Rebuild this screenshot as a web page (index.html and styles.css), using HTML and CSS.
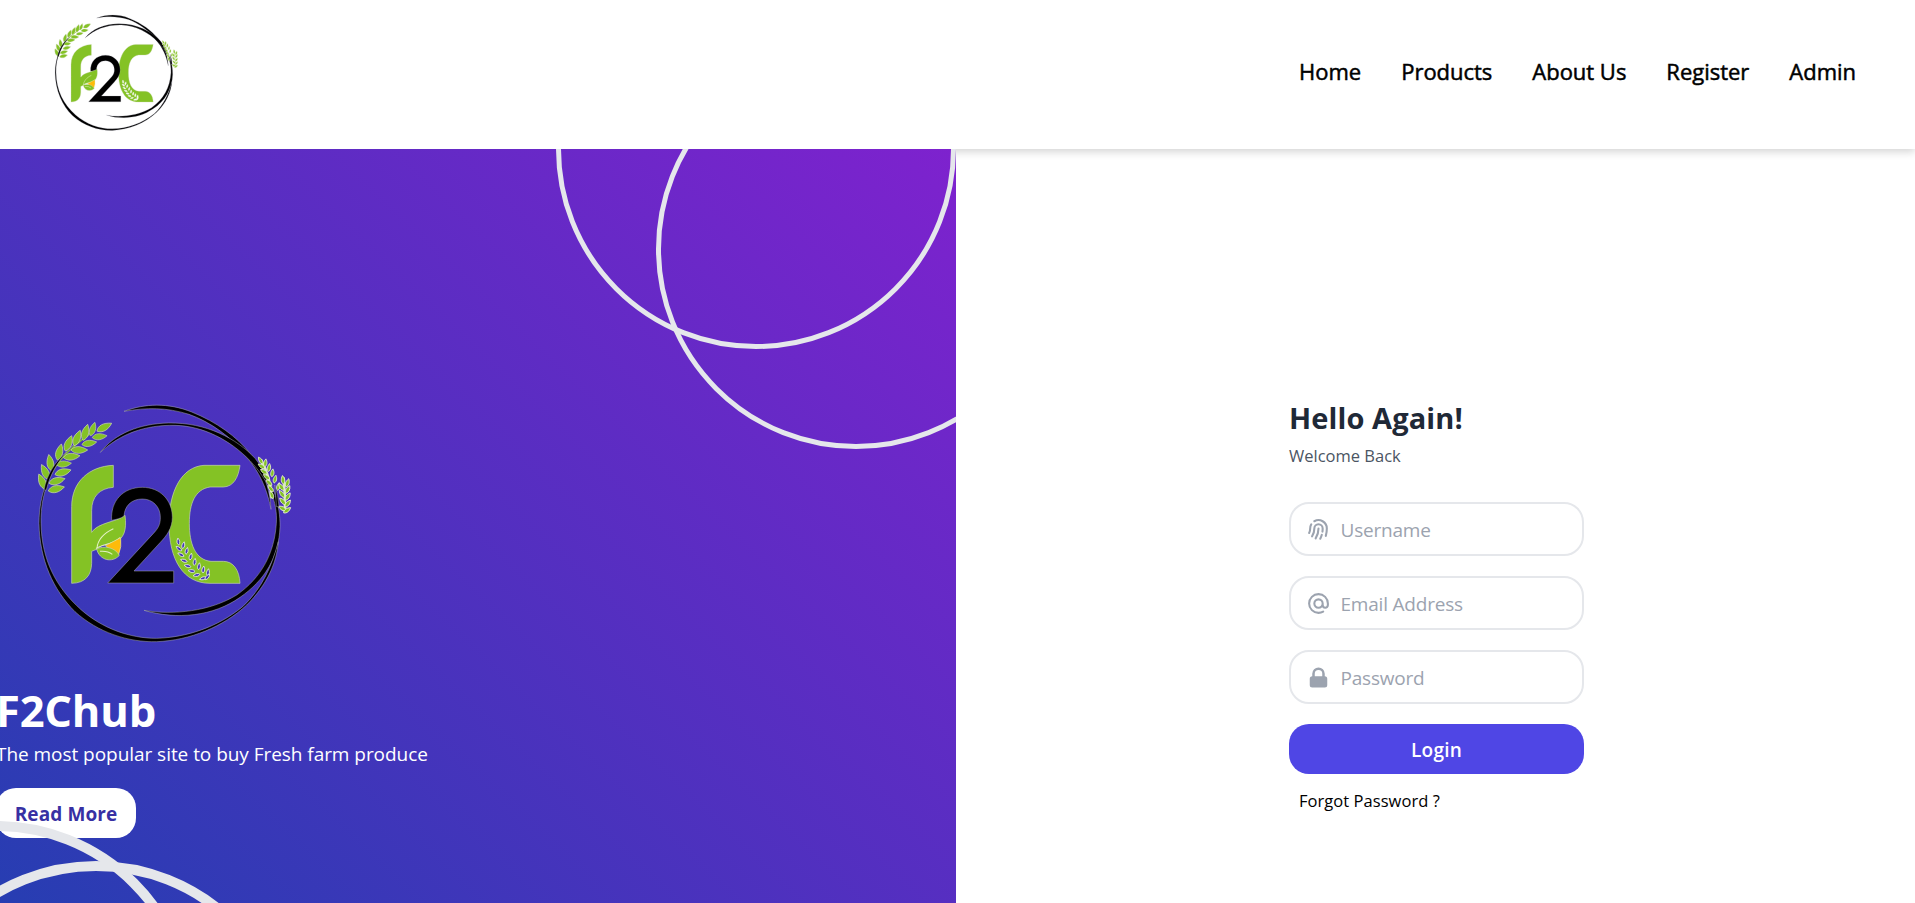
FILE: index.html
```html
<!DOCTYPE html>
<html lang="en">
<head>
<meta charset="utf-8">
<title>F2Chub</title>
<link rel="stylesheet" href="styles.css">
</head>
<body>
<svg class="defs" width="0" height="0" aria-hidden="true">
  <symbol id="leaf" viewBox="-26 -14 52 28" overflow="visible"><path d="M-24 1C-14-13 4-14 26-1C8 13-12 14-24 1Z"/></symbol>
  <symbol id="logo" viewBox="57 45 755 710" overflow="visible">
    <g class="ink">
      <path d="M312 64C375 40 445 38 515 66C590 96 650 140 690 190C730 240 750 295 753 358C741 295 718 245 677 198C638 143 570 95 507 73C440 52 380 52 312 64Z"/>
      <path d="M241 187C285 130 360 101 445 99C560 97 650 146 705 205C760 275 781 345 780 410C777 500 735 570 660 622C580 679 470 690 372 661C460 676 570 664 650 615C725 562 763 490 769 400C773 335 748 275 690 212C630 150 550 108 465 106C375 104 300 132 241 187Z"/>
      <path d="M160 165C90 225 57 310 57 400C59 510 100 600 165 665C235 728 325 757 410 755C510 751 610 710 680 645C740 585 770 520 775 455C755 530 725 597 668 650C592 712 500 742 410 745C330 745 248 716 183 659C108 592 65 510 63 400C61 305 95 230 160 165Z"/>
    </g>
    <g class="green">
      <path d="M280 226V292C238 295 215 320 215 362V427C235 397 285 398 315 376C321 420 312 446 284 457C262 464 245 462 234 476L215 484V520C214 556 196 579 155 580V350C155 275 208 229 280 226Z"/>
      <path d="M660 226H552C485 230 447 304 447 400C447 510 490 580 570 580H660C658 540 640 514 610 514H573C525 510 508 460 508 400C508 340 525 298 570 291H610C641 290 655 262 660 226Z"/>
    </g>
    <path class="ink" d="M275 391C271 332 310 292 367 292C420 292 457 330 457 382C457 415 440 437 420 458L342 543H461V579H263L405 425C418 410 421 398 421 382C421 350 398 327 367 327C335 327 314 347 312 378C302 386 288 388 275 391Z"/>
    <path class="vein" d="M231 474C233 452 250 430 280 416"/>
    <path class="vein" d="M228 476C245 460 275 468 300 443"/>
    <path class="seed" d="M302 443L256 467L295 496Q306 470 302 443Z"/>
    <path class="green" d="M230 477C250 466 285 471 298 496C277 520 238 511 230 477Z"/>
    <path class="vein" d="M240 484Q263 482 277 493"/>
    <path class="stem" d="M74 300C88 240 130 185 220 125"/>
    <g class="green">
      <use href="#leaf" transform="translate(252 112) rotate(-26)" x="-26" y="-14" width="52" height="28"/>
      <use href="#leaf" transform="translate(218 118) rotate(-70) scale(.85)" x="-26" y="-14" width="52" height="28"/>
      <use href="#leaf" transform="translate(196 128) rotate(-72)" x="-26" y="-14" width="52" height="28"/>
      <use href="#leaf" transform="translate(171 145) rotate(-66)" x="-26" y="-14" width="52" height="28"/>
      <use href="#leaf" transform="translate(145 161) rotate(-65)" x="-26" y="-14" width="52" height="28"/>
      <use href="#leaf" transform="translate(118 187) rotate(-74)" x="-26" y="-14" width="52" height="28"/>
      <use href="#leaf" transform="translate(91 219) rotate(-98)" x="-26" y="-14" width="52" height="28"/>
      <use href="#leaf" transform="translate(76 247) rotate(-114)" x="-26" y="-14" width="52" height="28"/>
      <use href="#leaf" transform="translate(67 276) rotate(-112)" x="-26" y="-14" width="52" height="28"/>
      <use href="#leaf" transform="translate(238 140) rotate(-5) scale(.9)" x="-26" y="-14" width="52" height="28"/>
      <use href="#leaf" transform="translate(207 160) rotate(-8) scale(.9)" x="-26" y="-14" width="52" height="28"/>
      <use href="#leaf" transform="translate(177 180) rotate(2)" x="-26" y="-14" width="52" height="28"/>
      <use href="#leaf" transform="translate(154 200) rotate(-4)" x="-26" y="-14" width="52" height="28"/>
      <use href="#leaf" transform="translate(131 222) rotate(-4) scale(.9)" x="-26" y="-14" width="52" height="28"/>
      <use href="#leaf" transform="translate(128 247) rotate(-14)" x="-26" y="-14" width="52" height="28"/>
      <use href="#leaf" transform="translate(110 273) rotate(-14)" x="-26" y="-14" width="52" height="28"/>
      <use href="#leaf" transform="translate(108 297) rotate(-12)" x="-26" y="-14" width="52" height="28"/>
    </g>
    <path class="ink" d="M72 300C80 255 105 215 140 186C110 220 90 255 79 300Z"/>
    <path class="grain-stem" d="M722 208Q752 260 755 325M790 262Q796 310 795 368"/>
    <g class="green grain">
      <use href="#leaf" transform="translate(722 212) rotate(-120) scale(.48)" x="-26" y="-14" width="52" height="28"/>
      <use href="#leaf" transform="translate(736 219) rotate(-80) scale(.48)" x="-26" y="-14" width="52" height="28"/>
      <use href="#leaf" transform="translate(725 229) rotate(-145) scale(.48)" x="-26" y="-14" width="52" height="28"/>
      <use href="#leaf" transform="translate(747 233) rotate(-80) scale(.48)" x="-26" y="-14" width="52" height="28"/>
      <use href="#leaf" transform="translate(732 245) rotate(-145) scale(.48)" x="-26" y="-14" width="52" height="28"/>
      <use href="#leaf" transform="translate(757 249) rotate(-80) scale(.48)" x="-26" y="-14" width="52" height="28"/>
      <use href="#leaf" transform="translate(740 261) rotate(-140) scale(.48)" x="-26" y="-14" width="52" height="28"/>
      <use href="#leaf" transform="translate(765 268) rotate(-75) scale(.48)" x="-26" y="-14" width="52" height="28"/>
      <use href="#leaf" transform="translate(747 278) rotate(-135) scale(.48)" x="-26" y="-14" width="52" height="28"/>
      <use href="#leaf" transform="translate(775 290) rotate(-75) scale(.48)" x="-26" y="-14" width="52" height="28"/>
      <use href="#leaf" transform="translate(752 296) rotate(-130) scale(.48)" x="-26" y="-14" width="52" height="28"/>
      <use href="#leaf" transform="translate(755 315) rotate(-110) scale(.48)" x="-26" y="-14" width="52" height="28"/>
      <use href="#leaf" transform="translate(789 270) rotate(-95) scale(.52)" x="-26" y="-14" width="52" height="28"/>
      <use href="#leaf" transform="translate(802 279) rotate(-70) scale(.52)" x="-26" y="-14" width="52" height="28"/>
      <use href="#leaf" transform="translate(784 291) rotate(-125) scale(.52)" x="-26" y="-14" width="52" height="28"/>
      <use href="#leaf" transform="translate(803 299) rotate(-60) scale(.52)" x="-26" y="-14" width="52" height="28"/>
      <use href="#leaf" transform="translate(786 312) rotate(-125) scale(.52)" x="-26" y="-14" width="52" height="28"/>
      <use href="#leaf" transform="translate(803 320) rotate(-55) scale(.52)" x="-26" y="-14" width="52" height="28"/>
      <use href="#leaf" transform="translate(788 334) rotate(-130) scale(.52)" x="-26" y="-14" width="52" height="28"/>
      <use href="#leaf" transform="translate(803 341) rotate(-50) scale(.52)" x="-26" y="-14" width="52" height="28"/>
      <use href="#leaf" transform="translate(787 355) rotate(-150) scale(.52)" x="-26" y="-14" width="52" height="28"/>
      <use href="#leaf" transform="translate(801 361) rotate(-35) scale(.52)" x="-26" y="-14" width="52" height="28"/>
    </g>
    <path class="ink" d="M764 285Q775 315 777 350L769 350Q768 315 764 285Z"/>
    <g class="hole">
      <use href="#leaf" transform="translate(475 455) rotate(-95) scale(.42)" x="-26" y="-14" width="52" height="28"/>
      <use href="#leaf" transform="translate(490 466) rotate(-75) scale(.42)" x="-26" y="-14" width="52" height="28"/>
      <use href="#leaf" transform="translate(477 476) rotate(-140) scale(.42)" x="-26" y="-14" width="52" height="28"/>
      <use href="#leaf" transform="translate(500 483) rotate(-75) scale(.42)" x="-26" y="-14" width="52" height="28"/>
      <use href="#leaf" transform="translate(483 494) rotate(-150) scale(.42)" x="-26" y="-14" width="52" height="28"/>
      <use href="#leaf" transform="translate(512 500) rotate(-75) scale(.42)" x="-26" y="-14" width="52" height="28"/>
      <use href="#leaf" transform="translate(492 512) rotate(-160) scale(.42)" x="-26" y="-14" width="52" height="28"/>
      <use href="#leaf" transform="translate(524 516) rotate(-80) scale(.42)" x="-26" y="-14" width="52" height="28"/>
      <use href="#leaf" transform="translate(503 528) rotate(-165) scale(.42)" x="-26" y="-14" width="52" height="28"/>
      <use href="#leaf" transform="translate(537 529) rotate(-80) scale(.42)" x="-26" y="-14" width="52" height="28"/>
      <use href="#leaf" transform="translate(515 543) rotate(-170) scale(.42)" x="-26" y="-14" width="52" height="28"/>
      <use href="#leaf" transform="translate(550 539) rotate(-80) scale(.42)" x="-26" y="-14" width="52" height="28"/>
      <use href="#leaf" transform="translate(530 555) rotate(170) scale(.42)" x="-26" y="-14" width="52" height="28"/>
      <use href="#leaf" transform="translate(564 547) rotate(-80) scale(.42)" x="-26" y="-14" width="52" height="28"/>
      <use href="#leaf" transform="translate(549 565) rotate(165) scale(.42)" x="-26" y="-14" width="52" height="28"/>
      <use href="#leaf" transform="translate(562 561) rotate(-50) scale(.42)" x="-26" y="-14" width="52" height="28"/>
    </g>
  </symbol>
</svg>

<header class="header">
  <svg class="header-logo" role="img" aria-label="F2C"><use href="#logo"/></svg>
  <nav class="nav">
    <a class="nav-link">Home</a>
    <a class="nav-link">Products</a>
    <a class="nav-link">About Us</a>
    <a class="nav-link">Register</a>
    <a class="nav-link">Admin</a>
  </nav>
</header>

<main class="main">
  <section class="hero">
    <svg class="hero-logo" role="img" aria-label="F2C"><use href="#logo"/></svg>
    <h1 class="hero-title">F2Chub</h1>
    <p class="hero-text">The most popular site to buy Fresh farm produce</p>
    <button class="hero-button">Read More</button>
    <div class="ring ring-a"></div>
    <div class="ring ring-b"></div>
    <div class="ring ring-c"></div>
    <div class="ring ring-d"></div>
  </section>

  <section class="login">
    <form class="form">
      <h2 class="form-title">Hello Again!</h2>
      <p class="form-text">Welcome Back</p>
      <div class="field">
        <svg class="icon" viewBox="0 0 24 24" fill="none" stroke="currentColor" stroke-width="2" stroke-linecap="round" stroke-linejoin="round"><path d="M12 11c0 3.517-1.009 6.799-2.753 9.571m-3.44-2.04l.054-.09A13.916 13.916 0 008 11a4 4 0 118 0c0 1.017-.07 2.019-.203 3m-2.118 6.844A21.88 21.88 0 0015.171 17m3.839 1.132c.645-2.266.99-4.659.99-7.132A8 8 0 008 4.07M3 15.364c.64-1.319 1-2.8 1-4.364 0-1.457.39-2.823 1.07-4"/></svg>
        <input class="input" type="text" placeholder="Username">
      </div>
      <div class="field">
        <svg class="icon" viewBox="0 0 24 24" fill="none" stroke="currentColor" stroke-width="2" stroke-linecap="round" stroke-linejoin="round"><path d="M16 12a4 4 0 10-8 0 4 4 0 008 0zm0 0v1.5a2.5 2.5 0 005 0V12a9 9 0 10-9 9m4.5-1.206a8.959 8.959 0 01-4.5 1.207"/></svg>
        <input class="input" type="text" placeholder="Email Address">
      </div>
      <div class="field">
        <svg class="icon" viewBox="0 0 20 20" fill="currentColor"><path fill-rule="evenodd" d="M5 9V7a5 5 0 0110 0v2a2 2 0 012 2v5a2 2 0 01-2 2H5a2 2 0 01-2-2v-5a2 2 0 012-2zm8-2v2H7V7a3 3 0 016 0z" clip-rule="evenodd"/></svg>
        <input class="input" type="text" placeholder="Password">
      </div>
      <button class="submit" type="button">Login</button>
      <a class="forgot">Forgot Password ?</a>
    </form>
  </section>
</main>
</body>
</html>
```
FILE: styles.css
```css
* { box-sizing: border-box; }

html, body { height: 100%; }

body {
  margin: 0;
  overflow: hidden;
  background: #fff;
  color: #000;
  font-family: "Segoe UI", "Open Sans", "Noto Sans", sans-serif;
}

h1, h2, p { margin: 0; }

button {
  border: 0;
  font-family: inherit;
}

.defs { position: absolute; }

.ink { fill: #000; stroke: #a6a6b4; stroke-width: 1.5; }
.green { fill: #84c225; stroke: #c9d6b0; stroke-width: 2; }
.grain { stroke: #e6efd0; stroke-width: 5; }
.grain-stem { fill: none; stroke: #dcebc0; stroke-width: 8; }
.seed { fill: #fdbb0a; stroke: #d9e3a8; stroke-width: 2; }
.vein { fill: none; stroke: #e4f2c4; stroke-width: 3; }
.stem { fill: none; stroke: #84c225; stroke-width: 4; }
.hole { fill: var(--hole); stroke: #e4efd6; stroke-width: 6; }

/* Header */
.header {
  display: flex;
  justify-content: space-between;
  align-items: flex-start;
  height: 149px;
  padding: 15px 59px 0 55px;
  background: #fff;
  box-shadow: 0 3px 8px rgba(0, 0, 0, .17);
}

.header-logo {
  --hole: #fff;
  width: 123px;
  height: 115.5px;
  overflow: visible;
}

.nav {
  display: flex;
  gap: 40px;
  padding-top: 41px;
}

.nav-link {
  font-size: 22px;
  font-weight: 500;
  line-height: 30px;
  letter-spacing: -.02px;
  -webkit-text-stroke: .5px #000;
}

/* Split layout */
.main {
  display: flex;
  height: 912px;
  margin-left: -4px;
}

.hero {
  position: relative;
  display: flex;
  flex-direction: column;
  align-items: flex-start;
  width: 960px;
  flex: none;
  padding-top: 256px;
  overflow: hidden;
  background: linear-gradient(to top right, #1e40af, #7e22ce);
  color: #fff;
}

.hero-logo {
  --hole: #4436b9;
  width: 251.7px;
  height: 236.7px;
  margin: 0 0 44px 43px;
  overflow: visible;
}

.hero-title {
  font-size: 43.5px;
  font-weight: 700;
  line-height: 50px;
  letter-spacing: -.2px;
}

.hero-text {
  margin-top: 3px;
  font-size: 19px;
  line-height: 30px;
  letter-spacing: -.045px;
  white-space: nowrap;
}

.hero-button {
  width: 140px;
  height: 50px;
  margin-top: 19px;
  padding: 2px 0 0;
  border-radius: 20px;
  background: #fff;
  color: #3730a3;
  font-size: 19px;
  font-weight: 700;
  letter-spacing: .1px;
}

.ring {
  position: absolute;
  width: 400px;
  height: 400px;
  border: 5px solid #e5e7eb;
  border-radius: 50%;
}

.ring-a { left: -200px; bottom: -160px; border-width: 10px; }
.ring-b { left: -100px; bottom: -200px; border-width: 10px; }
.ring-c { right: 0; top: -200px; }
.ring-d { right: -100px; top: -100px; }

/* Login form */
.login {
  flex: 1;
  padding: 249px 0 0 333px;
}

.form {
  display: flex;
  flex-direction: column;
  width: 295px;
}

.form-title {
  color: #1f2937;
  font-size: 29px;
  font-weight: 700;
  line-height: 40px;
  letter-spacing: .1px;
}

.form-text {
  margin: 5px 0 34px;
  color: #4b5563;
  font-size: 16.5px;
  line-height: 25px;
}

.field {
  display: flex;
  align-items: center;
  gap: 9.5px;
  height: 54px;
  margin-bottom: 20px;
  padding: 0 15px;
  border: 2px solid #e5e7eb;
  border-radius: 20px;
}

.icon {
  flex: none;
  width: 25px;
  height: 25px;
  color: #9ca3af;
}

.input {
  min-width: 0;
  flex: 1;
  padding: 2px 0 0;
  border: 0;
  outline: 0;
  background: transparent;
  font-family: inherit;
  font-size: 19px;
  letter-spacing: -.2px;
}

.input::placeholder { color: #9ca3af; opacity: 1; }

.submit {
  height: 50px;
  padding: 2px 0 0;
  border-radius: 20px;
  background: #4f46e5;
  color: #fff;
  font-size: 19px;
  font-weight: 600;
  letter-spacing: .2px;
}

.forgot {
  margin: 14px 0 0 10px;
  font-size: 16.5px;
  line-height: 25px;
  letter-spacing: .05px;
}
```
